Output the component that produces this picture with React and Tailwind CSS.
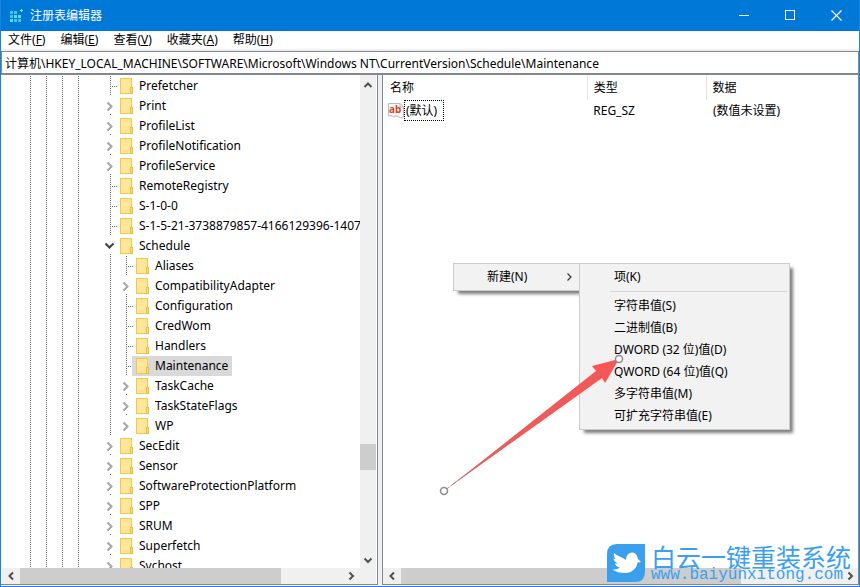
import React from 'react';

const folders = [
  { name: 'Prefetcher' },
  { name: 'Print', state: 'closed' },
  { name: 'ProfileList', state: 'closed' },
  { name: 'ProfileNotification', state: 'closed' },
  { name: 'ProfileService', state: 'closed' },
  { name: 'RemoteRegistry' },
  { name: 'S-1-0-0' },
  { name: 'S-1-5-21-3738879857-4166129396-1407' },
  { name: 'Schedule', state: 'open' },
  { name: 'Aliases', child: true },
  { name: 'CompatibilityAdapter', child: true, state: 'closed' },
  { name: 'Configuration', child: true },
  { name: 'CredWom', child: true },
  { name: 'Handlers', child: true },
  { name: 'Maintenance', child: true, selected: true },
  { name: 'TaskCache', child: true, state: 'closed' },
  { name: 'TaskStateFlags', child: true, state: 'closed' },
  { name: 'WP', child: true, state: 'closed', last: true },
  { name: 'SecEdit', state: 'closed' },
  { name: 'Sensor', state: 'closed' },
  { name: 'SoftwareProtectionPlatform', state: 'closed' },
  { name: 'SPP', state: 'closed' },
  { name: 'SRUM', state: 'closed' },
  { name: 'Superfetch', state: 'closed' },
  { name: 'Svchost', state: 'closed' },
];

const menus = [
  ['文件', 'F'],
  ['编辑', 'E'],
  ['查看', 'V'],
  ['收藏夹', 'A'],
  ['帮助', 'H'],
];

const valueTypes = [
  '字符串值(S)',
  '二进制值(B)',
  'DWORD (32 位)值(D)',
  'QWORD (64 位)值(Q)',
  '多字符串值(M)',
  '可扩充字符串值(E)',
];

const Guide = () => (
  <svg className="h-5 w-4 flex-none" viewBox="0 0 16 20" shapeRendering="crispEdges" aria-hidden="true">
    <path d="M8.5 0V20" stroke="#6b6b6b" strokeDasharray="1 1" />
  </svg>
);

// Connector in front of a folder: dotted elbow, or a chevron when it has subkeys
const Branch = ({ state, last }) => (
  <svg className="h-5 w-3.5 flex-none overflow-visible" viewBox="0 0 14 20" aria-hidden="true">
    {!state && (
      <g stroke="#6b6b6b" strokeDasharray="1 1" shapeRendering="crispEdges">
        <path d="M8.5 0V20" />
        <path d="M10 10.5H16" />
      </g>
    )}
    {state && !last && (
      <path d="M8.5 18V20" stroke="#6b6b6b" strokeDasharray="1 1" shapeRendering="crispEdges" />
    )}
    {state === 'closed' && <path d="M5.5 6.5L9.5 10.5L5.5 14.5" fill="none" stroke="#a6a6a6" strokeWidth="2" />}
    {state === 'open' && <path d="M3.5 7.5L7.5 11.5L11.5 7.5" fill="none" stroke="#404040" strokeWidth="2" />}
  </svg>
);

const FolderIcon = () => (
  <svg className="h-4 w-[13px] flex-none" viewBox="0 0 13 16" aria-hidden="true">
    <rect x="0.5" y="0.5" width="11" height="15" fill="#ffe69a" stroke="#efc94c" />
    <rect x="10.5" y="9.5" width="2" height="6" fill="#ffe080" stroke="#e8bd3c" />
  </svg>
);

const TreeItem = ({ name, child, state, selected, last }) => (
  <li className="flex h-5 pl-5">
    <Guide />
    <Guide />
    <Guide />
    <Guide />
    <span className="w-4 flex-none" />
    {child && <Guide />}
    <Branch state={state} last={last} />
    <button
      type="button"
      className={`flex h-5 flex-none items-center gap-1.5 whitespace-nowrap px-1 ${selected ? 'bg-[#d9d9d9]' : ''}`}
    >
      <FolderIcon />
      {name}
    </button>
  </li>
);

const arrows = {
  up: 'M4.5 10L8 6.5L11.5 10',
  down: 'M4.5 6.5L8 10L11.5 6.5',
  left: 'M10 4.5L6.5 8L10 11.5',
  right: 'M6.5 4.5L10 8L6.5 11.5',
};

const ScrollArrow = ({ dir }) => (
  <button type="button" aria-label={`scroll ${dir}`} className="flex size-4 flex-none items-center justify-center">
    <svg className="size-4" viewBox="0 0 16 16" fill="none" stroke="#505050" strokeWidth="2">
      <path d={arrows[dir]} />
    </svg>
  </button>
);

const TitleBar = () => (
  <header className="flex h-[31px] flex-none items-center bg-[#0078d7] text-white">
    <svg className="ml-2 size-4" viewBox="0 0 16 16" shapeRendering="crispEdges" aria-hidden="true">
      <g fill="#3fc6ea">
        <path d="M1 3h3v3h-3zM5 3h3v3h-3zM1 7h3v3h-3z" />
        <path d="M5 7h3v3h-3zM9 7h3v3h-3zM1 11h3v3h-3z" fill="#62daf5" />
        <path d="M5 11h3v3h-3zM9 11h3v3h-3z" />
        <path d="M12 1h1v1h1v1h-1v1h-1v-1h-1v-1h1z" fill="#8be6fa" />
      </g>
    </svg>
    <h1 className="ml-[5px] flex-1">注册表编辑器</h1>
    <button type="button" aria-label="最小化" className="flex h-full w-[46px] items-center justify-center">
      <svg className="size-[11px]" viewBox="0 0 11 11" stroke="#fff">
        <path d="M0 5.5H10" />
      </svg>
    </button>
    <button type="button" aria-label="最大化" className="flex h-full w-[46px] items-center justify-center">
      <svg className="size-[11px]" viewBox="0 0 11 11" fill="none" stroke="#fff">
        <rect x="0.5" y="0.5" width="9" height="9" />
      </svg>
    </button>
    <button type="button" aria-label="关闭" className="flex h-full w-[46px] items-center justify-center">
      <svg className="size-[11px]" viewBox="0 0 11 11" stroke="#fff" strokeWidth="1.2">
        <path d="M0.5 0.5L10.5 10.5M10.5 0.5L0.5 10.5" />
      </svg>
    </button>
  </header>
);

const KeyTree = () => (
  <section className="flex min-h-0 min-w-0 flex-col border-b border-r border-[#828790] pl-px pr-px">
    <div className="flex min-h-0 flex-1">
      <ul className="min-w-0 flex-1 overflow-hidden pt-px">
        {folders.map((f) => (
          <TreeItem key={f.name} {...f} />
        ))}
      </ul>
      <div className="flex w-4 flex-none flex-col bg-[#f0f0f0] pt-0.5">
        <ScrollArrow dir="up" />
        <div className="flex flex-1 flex-col">
          <div className="flex-[350]" />
          <div className="flex-[26] bg-[#cdcdcd]" />
          <div className="flex-[82]" />
        </div>
        <ScrollArrow dir="down" />
      </div>
    </div>
    <div className="flex h-4 flex-none bg-[#f0f0f0] pl-px pr-[17px]">
      <ScrollArrow dir="left" />
      <div className="flex flex-1 pl-px">
        <div className="flex-[260] bg-[#cdcdcd]" />
        <div className="flex-[62]" />
      </div>
      <ScrollArrow dir="right" />
    </div>
  </section>
);

const ContextMenu = () => (
  <div className="absolute left-[70px] top-[188px] flex items-start">
    <div className="w-[126px] border border-r-0 border-[#cccccc] bg-[#f2f2f2] p-[2px] shadow-[4px_4px_3px_-1px_rgba(0,0,0,0.5)]">
      <button type="button" className="flex h-[22px] w-full items-center justify-between pl-[31px] pr-1">
        新建(N)
        <svg className="size-2" viewBox="0 0 8 8" fill="none" stroke="#333" strokeWidth="1.2">
          <path d="M2.5 0.5L6 4L2.5 7.5" />
        </svg>
      </button>
    </div>
    <div className="w-[211px] border border-[#cccccc] bg-[#f2f2f2] p-[2px] shadow-[4px_4px_3px_-1px_rgba(0,0,0,0.5)]">
      <button type="button" className="flex h-[22px] w-full items-center pl-8">
        项(K)
      </button>
      <hr className="my-[3px] ml-7 border-[#d7d7d7]" />
      {valueTypes.map((label) => (
        <button key={label} type="button" className="flex h-[22px] w-full items-center pl-8">
          {label}
        </button>
      ))}
    </div>
  </div>
);

// Red pointer with its two drag handles
const Pointer = () => (
  <svg className="pointer-events-none absolute left-[52px] top-[276px] h-[148px] w-[192px]" viewBox="0 0 192 148" aria-hidden="true">
    <path d="M9 140L161 20L157 15L184 8L170 32L167 27L9 140Z" fill="#fb5454" />
    <path d="M9 140L184 8" stroke="#8c8c8c" strokeDasharray="6 3" />
    <circle cx="9" cy="140" r="3.5" fill="#fff" stroke="#8c8c8c" strokeWidth="1.5" />
    <circle cx="184" cy="8" r="3.5" fill="#fff" stroke="#8c8c8c" strokeWidth="1.5" />
  </svg>
);

const ValueList = () => (
  <section className="relative flex min-h-0 min-w-0 flex-col border-b border-l border-r border-[#828790]">
    <div className="min-h-0 flex-1">
      <table className="w-full table-fixed text-left">
        <thead>
          <tr className="h-[25px]">
            <th className="w-[43%] border-r border-[#e5e5e5] pl-[7px] font-normal">名称</th>
            <th className="w-[25%] border-r border-[#e5e5e5] pl-[6px] font-normal">类型</th>
            <th className="pl-[6px] font-normal">数据</th>
          </tr>
        </thead>
        <tbody>
          <tr className="h-[21px]">
            <td className="pl-[5px]">
              <span className="flex items-center">
                <svg className="size-4" viewBox="0 0 16 16" aria-hidden="true">
                  <path d="M0.5 0.5H12L15.5 4V14L13 15L10 13.5L8 13L5.5 14L3 12.5L0.5 13Z" fill="#f8f8f8" stroke="#b9b9b9" />
                  <path d="M12 0.5V4H15.5" fill="none" stroke="#b9b9b9" />
                  <text x="1" y="10" fontSize="10" fontWeight="700" fill="#d2492a">ab</text>
                </svg>
                <span className="border border-dotted border-black pl-px pr-1.5 leading-[19px]">(默认)</span>
              </span>
            </td>
            <td className="pl-[6px]">REG_SZ</td>
            <td className="pl-[7px]">(数值未设置)</td>
          </tr>
        </tbody>
      </table>
    </div>
    <div className="flex h-4 flex-none bg-[#f0f0f0] pl-px">
      <ScrollArrow dir="left" />
      <div className="flex flex-1 pl-px">
        <div className="flex-[340] bg-[#cdcdcd]" />
        <div className="flex-[101]" />
      </div>
      <ScrollArrow dir="right" />
    </div>
    <ContextMenu />
    <Pointer />
  </section>
);

const Watermark = () => (
  <a href="#" className="absolute bottom-1 right-2 flex items-center gap-1.5 text-[#3aa0ee]">
    <svg className="size-[38px]" viewBox="0 0 38 38" aria-hidden="true">
      <path d="M10 0H38V28Q38 38 28 38H0V10Q0 0 10 0Z" fill="#3aa0ee" />
      <path
        d="M7 9C10 12 15 13 19 16C19 12 21 9 25 8.5C27.5 8.5 29 10 30 12L31 15L34 18L30.5 18.5C30 24 25 29 18 29C13 29 9 28 5.5 25.5C9 25.5 11 25 13 23.5C10 23 8.5 21.5 8 19.5L10.5 19.5C8 18 7 16.5 6.5 14.5L8.5 15C7 13 6.5 11 7 9Z"
        fill="#fff"
      />
    </svg>
    <span className="flex flex-col">
      <span className="text-[25px] leading-6">白云一键重装系统</span>
      <span className="font-['Liberation_Mono',monospace] text-base leading-3">www.baiyunxitong.com</span>
    </span>
  </a>
);

const App = () => (
  <div className="relative flex h-screen flex-col overflow-hidden border border-t-0 border-[#1883d7] bg-white font-['Noto_Sans','Noto_Sans_CJK_SC',sans-serif] text-xs leading-4 text-black">
    <TitleBar />
    <nav className="flex h-5 flex-none items-center gap-[15px] border-b-2 border-[#f0f0f0] pl-[7px]">
      {menus.map(([label, key]) => (
        <button key={key} type="button" className="whitespace-nowrap">
          {label}(<u>{key}</u>)
        </button>
      ))}
    </nav>
    <input
      type="text"
      aria-label="地址"
      defaultValue="计算机\HKEY_LOCAL_MACHINE\SOFTWARE\Microsoft\Windows NT\CurrentVersion\Schedule\Maintenance"
      className="h-6 flex-none border border-b-2 border-[#828790] px-[3px] outline-none"
    />
    <main className="grid min-h-0 flex-1 grid-cols-[377fr_4px_477fr] grid-rows-[minmax(0,1fr)] pb-px">
      <KeyTree />
      <div className="bg-[#f0f0f0]" />
      <ValueList />
    </main>
    <Watermark />
  </div>
);

export default App;
